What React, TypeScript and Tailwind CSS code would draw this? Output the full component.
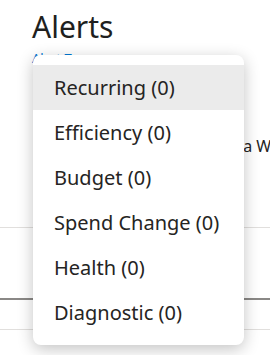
import { useState } from 'react';

const alertTypes = [
  { label: 'Recurring', count: 0 },
  { label: 'Efficiency', count: 0 },
  { label: 'Budget', count: 0 },
  { label: 'Spend Change', count: 0 },
  { label: 'Health', count: 0 },
  { label: 'Diagnostic', count: 0 },
];

export default function App() {
  return (
    <div className="relative h-[355px] w-[270px] overflow-hidden bg-white font-['Noto_Sans','Open_Sans',sans-serif] text-[#252423]">
      <Page />
      <AlertTypeMenu />
    </div>
  );
}

const Page = () => {
  return (
    <section className="flex flex-col pl-[32px] pt-[9px]">
      <h1 className="text-[30px] leading-[36px] font-normal text-[#201f1e]">Alerts</h1>
      <a className="mt-[4px] text-[13px] leading-[18px] text-[#0078d4]">Alert Type</a>
      <div className="h-[69px]" />
      <p className="whitespace-nowrap pl-[6px] text-[16px] leading-[20px] text-[#252423]">
        <span className="inline-block w-[201px] overflow-hidden align-bottom">Set up alerts to track spend in</span>
        <span> a Workspace</span>
      </p>
      <div className="h-[71px]" />
      <div className="-ml-[32px] flex flex-col">
        <div className="h-[71px] border-t border-[#e1dfdd]" />
        <div className="h-[31px] border-t-2 border-[#8a8886]" />
        <div className="border-t border-[#e1dfdd]" />
      </div>
    </section>
  );
};

const AlertTypeMenu = () => {
  const [active, setActive] = useState(0);

  return (
    <ul className="absolute left-[33px] top-[55px] flex w-[211px] flex-col rounded-[8px] bg-white py-[10px] shadow-[0_4px_16px_rgba(0,0,0,0.24)]">
      {alertTypes.map((item, i) => (
        <li
          key={item.label}
          onMouseEnter={() => setActive(i)}
          className={`flex h-[45px] items-center pl-[21px] text-[20px] leading-[26px] text-[#252423] ${
            active === i ? 'bg-[#ebebeb]' : ''
          }`}
        >
          {item.label} ({item.count})
        </li>
      ))}
    </ul>
  );
};
